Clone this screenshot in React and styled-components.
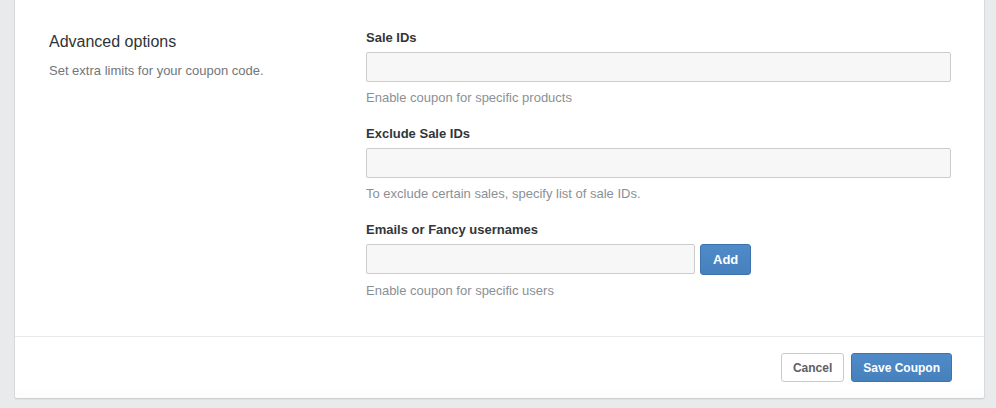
import React, { useState } from "react";
import styled, { createGlobalStyle } from "styled-components";

const GlobalStyle = createGlobalStyle`
  html, body {
    margin: 0;
    padding: 0;
    background: #e9eaec;
    font-family: "Liberation Sans", Arial, "Helvetica Neue", sans-serif;
    color: #333;
  }
  * {
    box-sizing: border-box;
  }
`;

const Page = styled.main`
  padding: 0 11px 9px 14px;
  height: 408px;
  overflow: hidden;
`;

const Card = styled.section`
  margin-top: -5px;
  background: #fff;
  border: 1px solid #d9dadc;
  border-bottom-color: #cfd0d2;
  border-radius: 3px;
  box-shadow: 0 1px 1px rgba(0, 0, 0, 0.04);
`;

const Body = styled.div`
  display: grid;
  grid-template-columns: 317px 1fr;
  padding: 33px 33px 36px 34px;
`;

const Intro = styled.div`
  display: flex;
  flex-direction: column;
`;

const Title = styled.h2`
  margin: 3px 0 0;
  font-size: 16px;
  line-height: 20px;
  font-weight: normal;
  color: #2f3337;
`;

const Description = styled.p`
  margin: 10px 0 0;
  font-size: 13px;
  line-height: 18px;
  color: #71767c;
`;

const Fields = styled.div`
  display: flex;
  flex-direction: column;
  gap: 18px;
`;

const Field = styled.div`
  display: flex;
  flex-direction: column;
`;

const Label = styled.label`
  font-size: 13px;
  line-height: 18px;
  font-weight: bold;
  color: #32363b;
  margin-bottom: 5px;
`;

const InputRow = styled.div`
  display: flex;
  align-items: flex-start;
  gap: 5px;
`;

const TextInput = styled.input`
  height: 30px;
  width: ${(p) => (p.$short ? "329px" : "100%")};
  margin: 0;
  padding: 0 8px;
  background: #f7f7f7;
  border: 1px solid #cbcccd;
  border-radius: 2px;
  font-family: inherit;
  font-size: 13px;
  color: #333;
  outline: none;
`;

const Help = styled.div`
  margin-top: 7px;
  font-size: 13px;
  line-height: 18px;
  color: #8b9096;
`;

const Footer = styled.footer`
  display: flex;
  justify-content: flex-end;
  gap: 7px;
  padding: 16px 32px 16px;
  border-top: 1px solid #e8e9ea;
  background: linear-gradient(#fff 80%, #fcfcfc);
  border-radius: 0 0 3px 3px;
`;

const Button = styled.button`
  height: ${(p) => (p.$tall ? "31px" : "29px")};
  padding: 0 ${(p) => (p.$tall ? "12px" : "11px")};
  margin: 0;
  font-family: inherit;
  font-size: ${(p) => (p.$tall ? "13px" : "12px")};
  font-weight: bold;
  border-radius: 3px;
  cursor: pointer;
  background: ${(p) => (p.$primary ? "#4a86c3" : "#fff")};
  color: ${(p) => (p.$primary ? "#fff" : "#5d6166")};
  border: 1px solid ${(p) => (p.$primary ? "#3e74ad" : "#c9cacc")};
  ${(p) =>
    p.$primary &&
    "background: linear-gradient(#4f8bc8, #4681be);"}
`;

export default function App() {
  const [saleIds, setSaleIds] = useState("");
  const [excludeIds, setExcludeIds] = useState("");
  const [user, setUser] = useState("");

  return (
    <>
      <GlobalStyle />
      <Page>
        <Card>
          <Body>
            <Intro>
              <Title>Advanced options</Title>
              <Description>Set extra limits for your coupon code.</Description>
            </Intro>
            <Fields>
              <Field>
                <Label>Sale IDs</Label>
                <TextInput
                  value={saleIds}
                  onChange={(e) => setSaleIds(e.target.value)}
                />
                <Help>Enable coupon for specific products</Help>
              </Field>
              <Field>
                <Label>Exclude Sale IDs</Label>
                <TextInput
                  value={excludeIds}
                  onChange={(e) => setExcludeIds(e.target.value)}
                />
                <Help>To exclude certain sales, specify list of sale IDs.</Help>
              </Field>
              <Field>
                <Label>Emails or Fancy usernames</Label>
                <InputRow>
                  <TextInput
                    $short
                    value={user}
                    onChange={(e) => setUser(e.target.value)}
                  />
                  <Button $primary $tall>
                    Add
                  </Button>
                </InputRow>
                <Help>Enable coupon for specific users</Help>
              </Field>
            </Fields>
          </Body>
          <Footer>
            <Button>Cancel</Button>
            <Button $primary>Save Coupon</Button>
          </Footer>
        </Card>
      </Page>
    </>
  );
}
